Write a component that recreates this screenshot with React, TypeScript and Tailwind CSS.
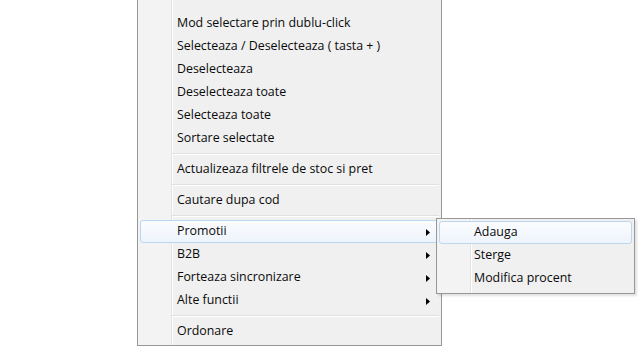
import React from 'react';

type Item = { label: string; sub?: boolean; active?: boolean } | 'sep';

const mainItems: Item[] = [
  { label: 'Mod selectare prin dublu-click' },
  { label: 'Selecteaza / Deselecteaza ( tasta + )' },
  { label: 'Deselecteaza' },
  { label: 'Deselecteaza toate' },
  { label: 'Selecteaza toate' },
  { label: 'Sortare selectate' },
  'sep',
  { label: 'Actualizeaza filtrele de stoc si pret' },
  'sep',
  { label: 'Cautare dupa cod' },
  'sep',
  { label: 'Promotii', sub: true, active: true },
  { label: 'B2B', sub: true },
  { label: 'Forteaza sincronizare', sub: true },
  { label: 'Alte functii', sub: true },
  'sep',
  { label: 'Ordonare' },
];

const subItems: Item[] = [
  { label: 'Adauga', active: true },
  { label: 'Sterge' },
  { label: 'Modifica procent' },
];

// gutter + its double line are painted as the menu background
const menuBg =
  'bg-[linear-gradient(to_right,#f3f3f3_0px,#f3f3f3_33px,#e2e3e3_33px,#e2e3e3_34px,#ffffff_34px,#ffffff_35px,#f0f0f0_35px)]';

const Arrow = () => (
  <svg width="4" height="7" viewBox="0 0 4 7" className="absolute right-[8px] top-[8px]">
    <polygon points="0,0 4,3.5 0,7" fill="#000" />
  </svg>
);

const Row = ({ item, indent }: { item: Exclude<Item, 'sep'>; indent: string }) => (
  <div
    className={
      'relative flex h-[23px] items-center rounded-[3px] border ' +
      indent +
      (item.active
        ? ' border-[#bcd6f0] bg-[linear-gradient(to_bottom,#fbfcfe,#eef4fc)]'
        : ' border-transparent')
    }
  >
    <span className="text-[12.4px] leading-none text-[#0a0a0a]">{item.label}</span>
    {item.sub && <Arrow />}
  </div>
);

const Separator = () => (
  <div className="flex h-[8px] flex-col justify-center pl-[32px]">
    <div className="h-px bg-[#e0e0e0]" />
    <div className="h-px bg-white" />
  </div>
);

export default function App() {
  return (
    <div className="h-[354px] w-[638px] overflow-hidden bg-white pl-[137px] font-['Open_Sans',sans-serif]">
      <div
        className={
          'relative w-[305px] border-x border-b border-[#979797] px-[2px] pt-[12px] pb-[2px] ' + menuBg
        }
      >
        {mainItems.map((item, i) =>
          item === 'sep' ? <Separator key={i} /> : <Row key={i} item={item} indent="pl-[36px]" />
        )}

        {/* Promotii submenu */}
        <div
          className={
            'absolute left-[298px] top-[218px] w-[199px] border border-[#979797] px-[2px] pt-[2px] pb-[3px] shadow-[2px_2px_2px_rgba(0,0,0,0.12)] ' +
            menuBg
          }
        >
          {subItems.map((item, i) =>
            item === 'sep' ? null : <Row key={i} item={item} indent="pl-[34px]" />
          )}
        </div>
      </div>
    </div>
  );
}
